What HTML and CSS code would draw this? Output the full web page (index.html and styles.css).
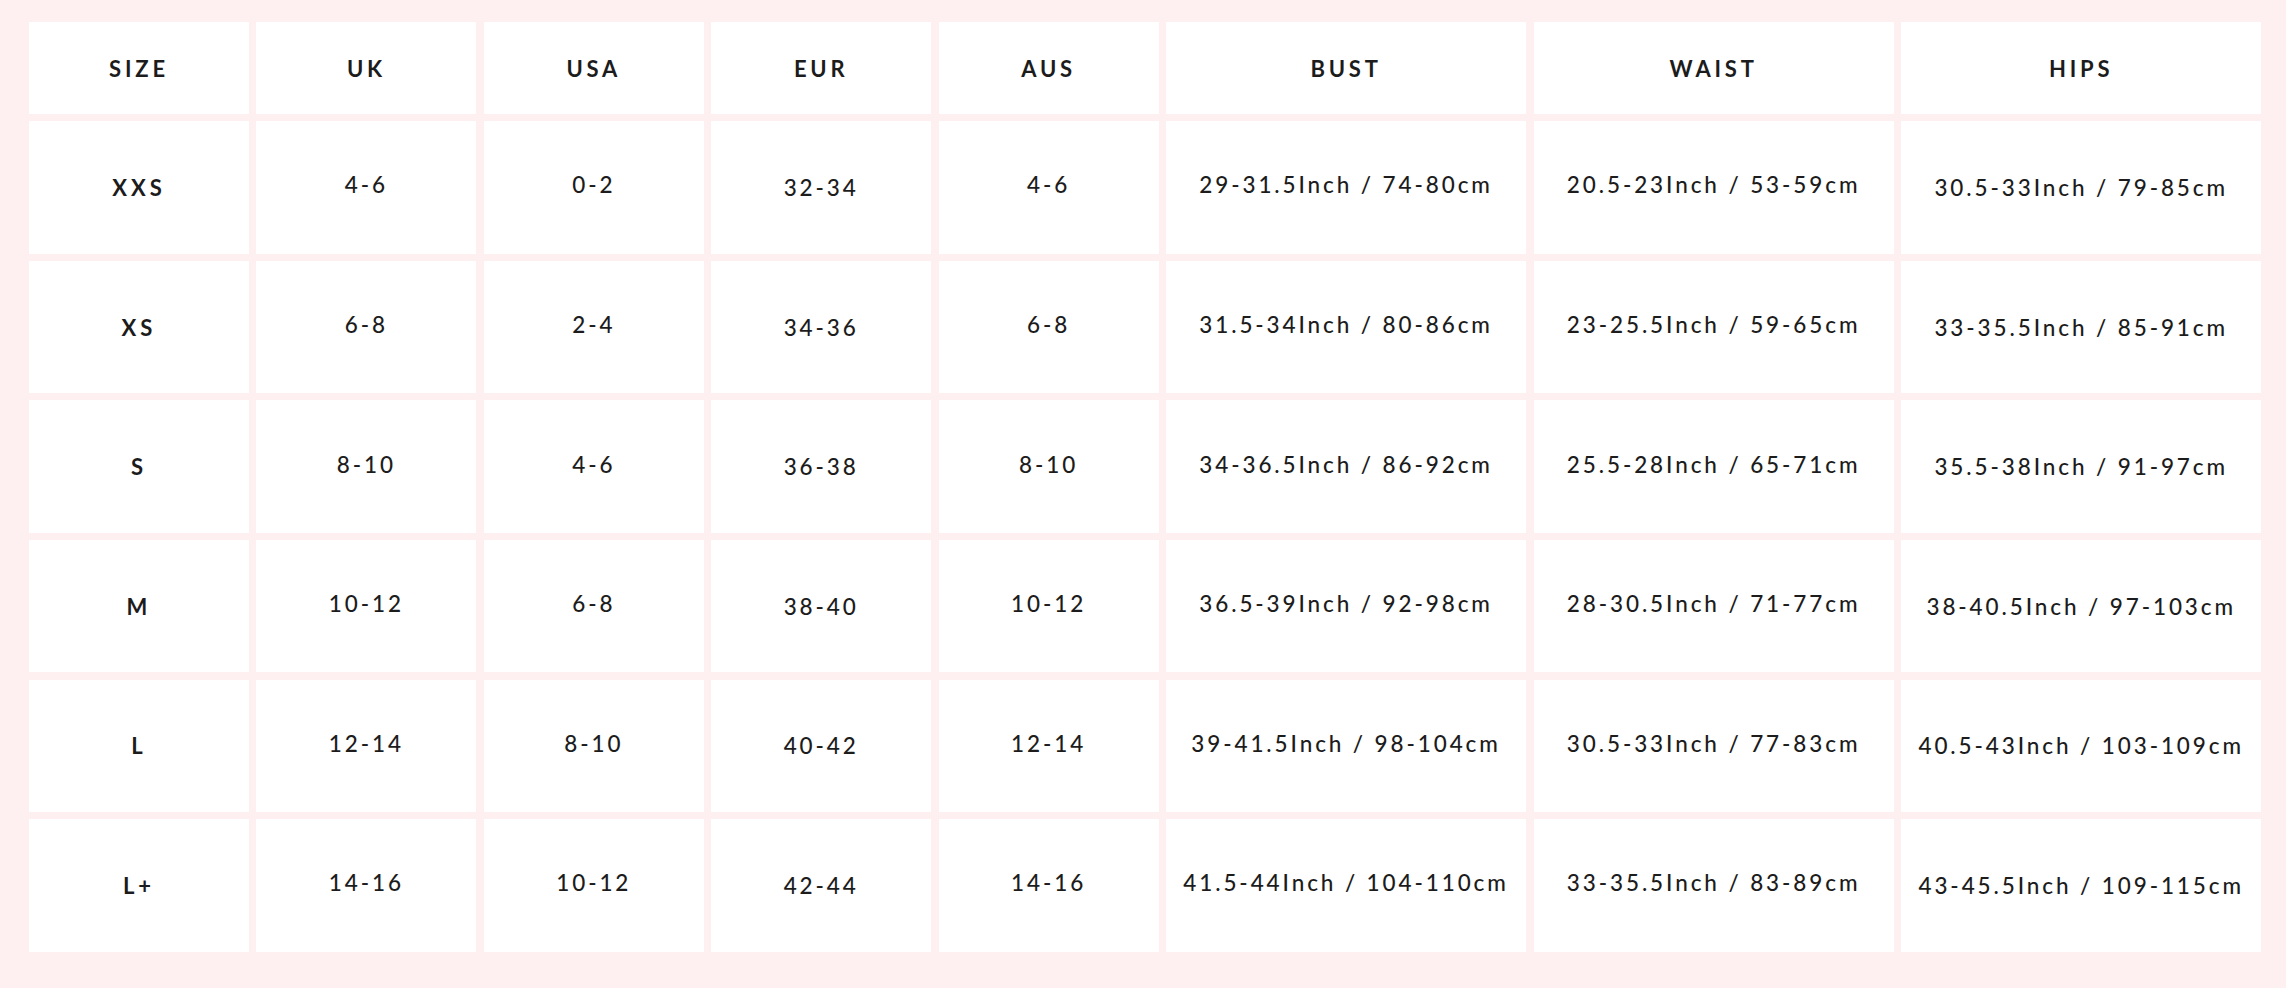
FILE: index.html
```html
<!DOCTYPE html>
<html lang="en">
<head>
<meta charset="utf-8">
<title>Size Chart</title>
<link rel="stylesheet" href="styles.css">
</head>
<body>
<main class="page">
  <div class="chart">
    <div class="cell head">SIZE</div>
    <div class="cell head">UK</div>
    <div class="cell head">USA</div>
    <div class="cell head">EUR</div>
    <div class="cell head">AUS</div>
    <div class="cell head">BUST</div>
    <div class="cell head">WAIST</div>
    <div class="cell head">HIPS</div>

    <div class="cell size">XXS</div>
    <div class="cell up">4-6</div>
    <div class="cell up">0-2</div>
    <div class="cell">32-34</div>
    <div class="cell up">4-6</div>
    <div class="cell up">29-31.5Inch / 74-80cm</div>
    <div class="cell up">20.5-23Inch / 53-59cm</div>
    <div class="cell">30.5-33Inch / 79-85cm</div>

    <div class="cell size">XS</div>
    <div class="cell up">6-8</div>
    <div class="cell up">2-4</div>
    <div class="cell">34-36</div>
    <div class="cell up">6-8</div>
    <div class="cell up">31.5-34Inch / 80-86cm</div>
    <div class="cell up">23-25.5Inch / 59-65cm</div>
    <div class="cell">33-35.5Inch / 85-91cm</div>

    <div class="cell size">S</div>
    <div class="cell up">8-10</div>
    <div class="cell up">4-6</div>
    <div class="cell">36-38</div>
    <div class="cell up">8-10</div>
    <div class="cell up">34-36.5Inch / 86-92cm</div>
    <div class="cell up">25.5-28Inch / 65-71cm</div>
    <div class="cell">35.5-38Inch / 91-97cm</div>

    <div class="cell size">M</div>
    <div class="cell up">10-12</div>
    <div class="cell up">6-8</div>
    <div class="cell">38-40</div>
    <div class="cell up">10-12</div>
    <div class="cell up">36.5-39Inch / 92-98cm</div>
    <div class="cell up">28-30.5Inch / 71-77cm</div>
    <div class="cell">38-40.5Inch / 97-103cm</div>

    <div class="cell size">L</div>
    <div class="cell up">12-14</div>
    <div class="cell up">8-10</div>
    <div class="cell">40-42</div>
    <div class="cell up">12-14</div>
    <div class="cell up">39-41.5Inch / 98-104cm</div>
    <div class="cell up">30.5-33Inch / 77-83cm</div>
    <div class="cell">40.5-43Inch / 103-109cm</div>

    <div class="cell size">L+</div>
    <div class="cell up">14-16</div>
    <div class="cell up">10-12</div>
    <div class="cell">42-44</div>
    <div class="cell up">14-16</div>
    <div class="cell up">41.5-44Inch / 104-110cm</div>
    <div class="cell up">33-35.5Inch / 83-89cm</div>
    <div class="cell">43-45.5Inch / 109-115cm</div>
  </div>
</main>
</body>
</html>
```
FILE: styles.css
```css
html, body {
  margin: 0;
  padding: 0;
  background: #fef0f0;
}

.page {
  padding: 22px 0 0 29px;
  font-family: "Lato", "Liberation Sans", sans-serif;
  color: #1c1c1c;
}

.chart {
  display: grid;
  grid-template-columns: repeat(5, 220px) repeat(3, 360.2px);
  grid-template-rows: 92px repeat(6, 132.3px);
  column-gap: 7.4px;
  row-gap: 7.3px;
}

.cell {
  background: #ffffff;
  display: flex;
  align-items: center;
  justify-content: center;
  font-size: 22.5px;
  font-weight: 500;
  letter-spacing: 2.9px;
  white-space: nowrap;
}

.cell.up {
  padding-bottom: 5px;
}

.head {
  font-weight: 700;
  font-size: 22px;
  letter-spacing: 3.8px;
}

.size {
  font-weight: 700;
  font-size: 22px;
  letter-spacing: 4px;
}
```
